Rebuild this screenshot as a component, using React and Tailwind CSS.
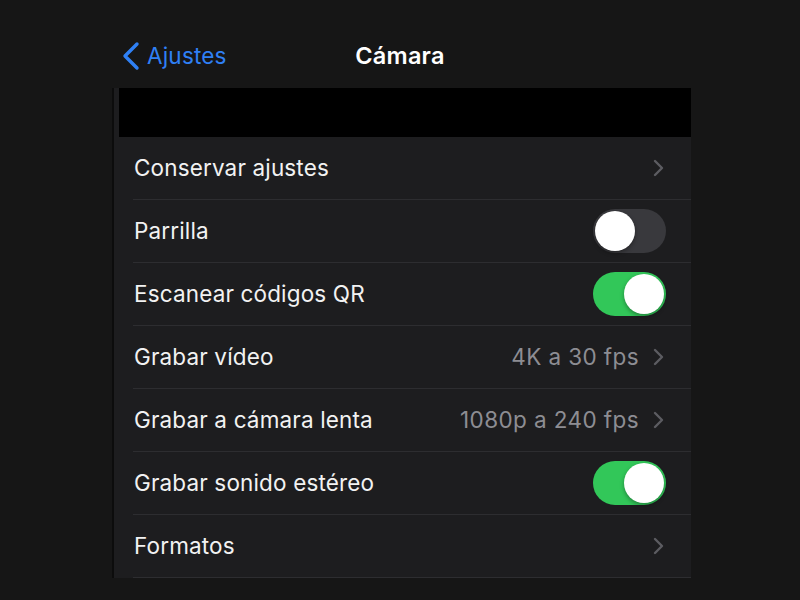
import React from 'react';

const rows = [
  { label: 'Conservar ajustes', kind: 'link' },
  { label: 'Parrilla', kind: 'toggle', on: false },
  { label: 'Escanear códigos QR', kind: 'toggle', on: true },
  { label: 'Grabar vídeo', kind: 'link', value: '4K a 30 fps' },
  { label: 'Grabar a cámara lenta', kind: 'link', value: '1080p a 240 fps' },
  { label: 'Grabar sonido estéreo', kind: 'toggle', on: true },
  { label: 'Formatos', kind: 'link' },
];

const Chevron = () => (
  <svg width="12" height="18" viewBox="0 0 12 18" fill="none" className="shrink-0">
    <path d="M3 2l7 7-7 7" stroke="#5c5c61" strokeWidth="2.4" strokeLinecap="round" strokeLinejoin="round" />
  </svg>
);

const Toggle = ({ on }) => (
  <div
    className={
      on
        ? 'w-[73px] h-[44px] rounded-full bg-[#32c759] p-[2px] flex justify-end'
        : 'w-[73px] h-[44px] rounded-full bg-[#39393d] p-[2px] flex justify-start'
    }
  >
    <div className="w-[40px] h-[40px] rounded-full bg-white shadow-[0_2px_4px_rgba(0,0,0,0.35)]" />
  </div>
);

const App = () => {
  return (
    <div
      className="w-[800px] h-[600px] bg-[#161616] overflow-hidden text-white"
      style={{ fontFamily: 'Inter, "Noto Sans", sans-serif' }}
    >
      {/* Navigation bar */}
      <div className="h-[88px] grid grid-cols-[1fr_auto_1fr] items-center px-[121px] pt-[24px]">
        <div className="flex items-center gap-[6px] text-[#2f80f5]">
          <svg width="20" height="30" viewBox="0 0 20 30" fill="none">
            <path d="M16 3L4 15l12 12" stroke="#2f80f5" strokeWidth="3.4" strokeLinecap="round" strokeLinejoin="round" />
          </svg>
          <span className="text-[22.5px] tracking-[0.2px]">Ajustes</span>
        </div>
        <div className="text-[23.5px] font-semibold tracking-[0.2px]">Cámara</div>
        <div />
      </div>

      {/* Settings list */}
      <div className="ml-[112px] w-[579px] border-l-2 border-[#0c0c0c] bg-[#1d1d1f]">
        <div className="ml-[5px] h-[49px] bg-black" />
        {rows.map((row) => (
          <div key={row.label} className="pl-[19px] h-[63px] flex">
            <div className="flex-1 flex items-center border-b border-[#2d2d30] pl-[1px] pr-[25px]">
              <span className="flex-1 text-[22.5px] tracking-[0.15px] text-[#f2f2f2]">{row.label}</span>
              {row.kind === 'toggle' ? (
                <Toggle on={row.on} />
              ) : (
                <div className="flex items-center gap-[13px] pr-[2px]">
                  {row.value && (
                    <span className="text-[22.5px] tracking-[0.4px] text-[#8d8d93]">{row.value}</span>
                  )}
                  <Chevron />
                </div>
              )}
            </div>
          </div>
        ))}
      </div>
    </div>
  );
};

export default App;
